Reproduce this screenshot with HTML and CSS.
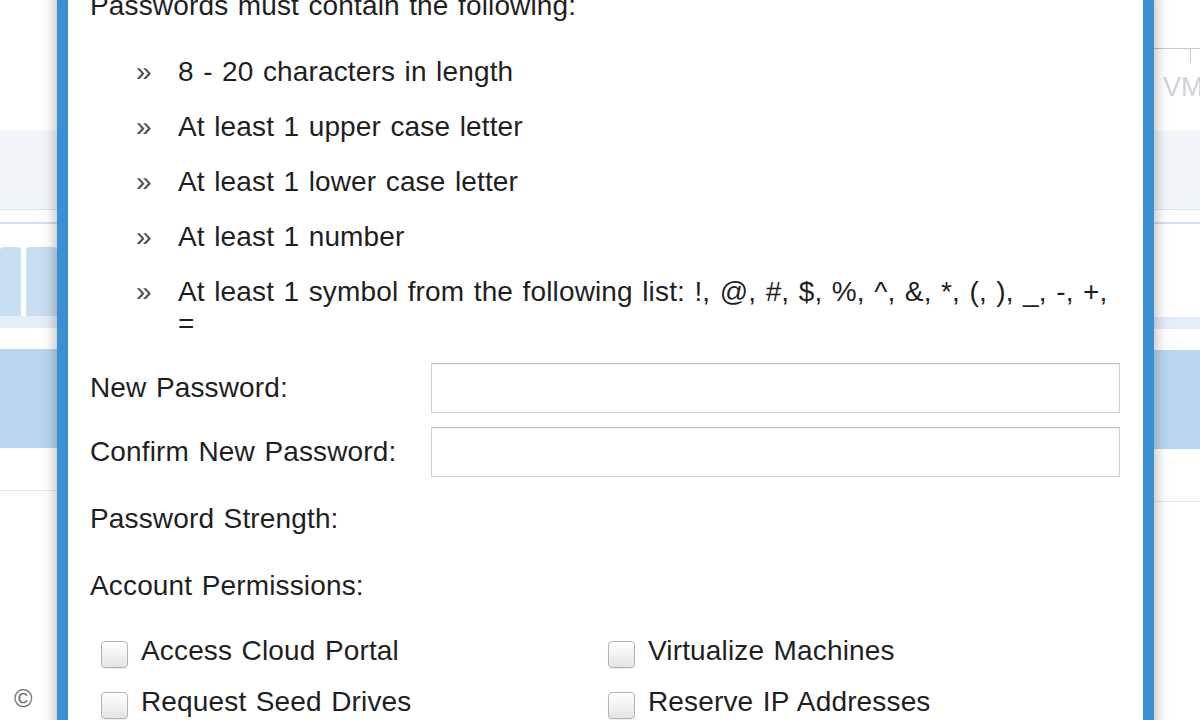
FILE: index.html
```html
<!DOCTYPE html>
<html>
<head>
<meta charset="utf-8">
<link rel="stylesheet" href="styles.css">
</head>
<body>
<div class="backdrop">
  <div class="side side-left">
    <div class="s-blank s-top"></div>
    <div class="s-band"></div>
    <div class="s-blank s-h12"></div>
    <div class="s-rule-blue"></div>
    <div class="s-blank s-h23"></div>
    <div class="tiles">
      <div class="tile tile-a"></div>
      <div class="tile tile-b"></div>
    </div>
    <div class="s-band-light"></div>
    <div class="s-blank s-h21"></div>
    <div class="s-band-blue"></div>
    <div class="s-blank s-h43"></div>
    <div class="s-rule-grey"></div>
    <div class="copy">©</div>
  </div>
  <div class="middle"></div>
  <div class="side side-right">
    <div class="s-blank s-h48"></div>
    <div class="col-head">
      <span class="tick"></span>
      <span class="vm">VM</span>
    </div>
    <div class="s-band"></div>
    <div class="s-blank s-h12"></div>
    <div class="s-rule-blue"></div>
    <div class="s-blank s-h93"></div>
    <div class="s-band-light"></div>
    <div class="s-blank s-h21"></div>
    <div class="s-band-blue"></div>
    <div class="s-blank s-h53"></div>
    <div class="s-rule-grey"></div>
  </div>
</div>

<div class="modal">
  <p class="intro">Passwords must contain the following:</p>
  <ul class="rules">
    <li><span class="bullet">»</span><span class="rule-text">8 - 20 characters in length</span></li>
    <li><span class="bullet">»</span><span class="rule-text">At least 1 upper case letter</span></li>
    <li><span class="bullet">»</span><span class="rule-text">At least 1 lower case letter</span></li>
    <li><span class="bullet">»</span><span class="rule-text">At least 1 number</span></li>
    <li><span class="bullet">»</span><span class="rule-text">At least 1 symbol from the following list: !, @, #, $, %, ^, &amp;, *, (, ), _, -, +, =</span></li>
  </ul>
  <div class="form-row first">
    <label class="form-label">New Password:</label>
    <input class="field" type="password">
  </div>
  <div class="form-row second">
    <label class="form-label">Confirm New Password:</label>
    <input class="field" type="password">
  </div>
  <div class="plain-label strength">Password Strength:</div>
  <div class="plain-label perms">Account Permissions:</div>
  <div class="checks">
    <label class="check"><span class="box"></span><span>Access Cloud Portal</span></label>
    <label class="check"><span class="box"></span><span>Virtualize Machines</span></label>
    <label class="check"><span class="box"></span><span>Request Seed Drives</span></label>
    <label class="check"><span class="box"></span><span>Reserve IP Addresses</span></label>
  </div>
</div>
</body>
</html>
```

FILE: styles.css
```css
html, body {
  margin: 0;
  padding: 0;
  width: 1200px;
  height: 720px;
  overflow: hidden;
  background: #ffffff;
  font-family: "Liberation Sans", Arial, sans-serif;
}

.backdrop {
  display: flex;
  width: 1200px;
  height: 720px;
}

.side {
  display: flex;
  flex-direction: column;
  position: relative;
}
.side-left { width: 57px; }
.side-right { width: 46px; }
.middle { flex: 1; }

.s-blank { background: #ffffff; }
.s-top { height: 131px; }
.s-h12 { height: 12px; }
.s-h23 { height: 23px; }
.s-h21 { height: 21px; }
.s-h43 { height: 42px; }
.s-h48 { height: 48px; }
.s-h53 { height: 52px; }
.s-h93 { height: 93px; }

.s-band {
  height: 78px;
  background: #f2f5f9;
  border-bottom: 1px solid #dfe3ea;
}
.s-rule-blue {
  height: 2px;
  background: #cfe1f2;
}
.s-rule-grey {
  height: 1px;
  background: #e6e6e6;
}
.s-band-light {
  height: 12px;
  background: #e4eef8;
}
.s-band-blue {
  height: 99px;
  background: #b8d6ee;
}

.tiles {
  display: flex;
  gap: 5px;
  height: 69px;
}
.tile {
  background: #c7ddf0;
  border-radius: 4px 4px 0 0;
}
.tile-a { width: 21px; }
.tile-b { flex: 1; }

.copy {
  margin-top: 194px;
  margin-left: 14px;
  font-size: 25px;
  line-height: 26px;
  color: #6a6a6a;
}

.col-head {
  height: 82px;
  border-top: 1px solid #c9c9c9;
  position: relative;
}
.tick {
  position: absolute;
  left: 36px;
  top: 0;
  width: 1px;
  height: 14px;
  background: #c9c9c9;
}
.vm {
  position: absolute;
  left: 9px;
  top: 23px;
  font-size: 27px;
  color: #d2cfe0;
}

/* Modal dialog overlay */
.modal {
  position: absolute;
  left: 57px;
  top: -10px;
  width: 1097px;
  height: 760px;
  box-sizing: border-box;
  background: #ffffff;
  border-left: 11px solid #3b8fd2;
  border-right: 11px solid #3b8fd2;
  box-shadow: 0 0 14px rgba(0, 0, 0, 0.35);
  padding: 0 23px 0 22px;
  color: #1f1f1f;
  font-size: 28px;
  line-height: 32px;
  letter-spacing: 0.15px;
  word-spacing: 1.5px;
}

.intro {
  margin: 0;
}

.rules {
  list-style: none;
  margin: 34px 0 0 0;
  padding: 0 0 0 46px;
}
.rules li {
  display: flex;
  margin-bottom: 23px;
}
.rules li:last-child { margin-bottom: 0; }
.bullet {
  flex: 0 0 42px;
  color: #4a4a4a;
}
.rule-text { flex: 1; }

.form-row {
  display: flex;
  align-items: center;
  height: 50px;
}
.form-row.first { margin-top: 23px; }
.form-row.second { margin-top: 14px; }
.form-label {
  flex: 0 0 341px;
}
.field {
  flex: 1;
  height: 50px;
  box-sizing: border-box;
  border: 1px solid #cfcfcf;
  border-top-color: #bdbdbd;
  background: #ffffff;
  box-shadow: inset 0 1px 1px rgba(0, 0, 0, 0.04);
  margin: 0;
  padding: 0 8px;
  font-size: 24px;
  outline: none;
}

.plain-label.strength { margin-top: 26px; }
.plain-label.perms { margin-top: 35px; }

.checks {
  margin-top: 33px;
  padding-left: 11px;
  display: grid;
  grid-template-columns: 507px 1fr;
  row-gap: 18px;
}
.check {
  display: flex;
  align-items: flex-start;
  gap: 13px;
}
.box {
  flex: 0 0 27px;
  height: 27px;
  box-sizing: border-box;
  margin-top: 6px;
  border: 1px solid #b3b3b3;
  border-radius: 4px;
  background: linear-gradient(#ffffff, #e4e4e4);
  box-shadow: 0 1px 1px rgba(0, 0, 0, 0.08);
}
```
